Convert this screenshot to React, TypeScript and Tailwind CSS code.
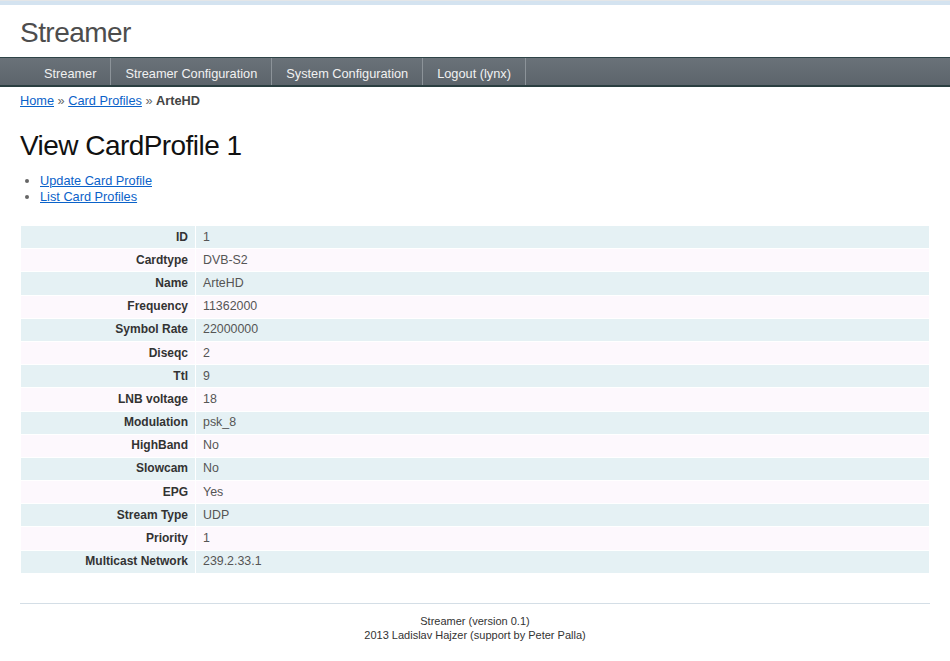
const menu = ["Streamer", "Streamer Configuration", "System Configuration", "Logout (lynx)"];

const rows: [string, string][] = [
  ["ID", "1"],
  ["Cardtype", "DVB-S2"],
  ["Name", "ArteHD"],
  ["Frequency", "11362000"],
  ["Symbol Rate", "22000000"],
  ["Diseqc", "2"],
  ["Ttl", "9"],
  ["LNB voltage", "18"],
  ["Modulation", "psk_8"],
  ["HighBand", "No"],
  ["Slowcam", "No"],
  ["EPG", "Yes"],
  ["Stream Type", "UDP"],
  ["Priority", "1"],
  ["Multicast Network", "239.2.33.1"],
];

export default function App() {
  return (
    <div className="min-h-[661px] w-[950px] bg-white font-['Liberation_Sans',Arial,sans-serif] text-[#333]">
      <div className="h-[1px] bg-[#e4e6e8]" />
      <div className="h-[4px] bg-[#d4e3f0]" />

      <header className="h-[52px] px-[20px] pt-[12px]">
        <div className="text-[28px] leading-[32px] tracking-[-0.55px] text-[#4d4d4d]">Streamer</div>
      </header>

      <nav className="flex h-[30px] border-t border-b-2 border-t-[#2e4447] border-b-[#2a3e40] bg-gradient-to-b from-[#6a7279] to-[#5c646b] pl-[30px]">
        {menu.map((item) => (
          <div
            key={item}
            className="border-r border-r-[#8c9399] px-[14px] pt-[7px] pb-[3px] text-[12.75px] leading-[17px] text-[#f1f1f1]"
          >
            {item}
          </div>
        ))}
      </nav>

      <div className="mt-[6px] px-[20px] text-[12.75px] leading-[16px]">
        <a href="#" className="text-[#0a62c9] underline">Home</a>
        <span className="text-[#666]"> » </span>
        <a href="#" className="text-[#0a62c9] underline">Card Profiles</a>
        <span className="text-[#666]"> » </span>
        <span className="font-bold text-[#444]">ArteHD</span>
      </div>

      <main className="px-[20px]">
        <h1 className="mt-[21px] text-[28px] leading-[32px] tracking-[-0.55px] text-[#111]">View CardProfile 1</h1>

        <ul className="mt-[11px] list-disc pl-[20px] text-[12.75px] leading-[16px] marker:text-[#666]">
          <li>
            <a href="#" className="text-[#0a62c9] underline">Update Card Profile</a>
          </li>
          <li>
            <a href="#" className="text-[#0a62c9] underline">List Card Profiles</a>
          </li>
        </ul>

        <table className="mt-[20px] w-full border-separate border-spacing-[1px]">
          <tbody>
            {rows.map(([label, value], i) => (
              <tr key={label} className={i % 2 === 0 ? "bg-[#e5f1f4]" : "bg-[#fdf8fd]"}>
                <th className="h-[22.2px] w-[174px] px-[7px] py-0 text-right text-[12px] font-bold leading-[15px] text-[#333]">
                  {label}
                </th>
                <td className="h-[22.2px] px-[7px] py-0 text-[12.4px] leading-[15px] text-[#555]">{value}</td>
              </tr>
            ))}
          </tbody>
        </table>
      </main>

      <footer className="mx-[20px] mt-[29px] border-t border-t-[#d4dee6] pt-[10px] text-center text-[11px] leading-[14px] text-[#333]">
        <div>Streamer (version 0.1)</div>
        <div>2013 Ladislav Hajzer (support by Peter Palla)</div>
      </footer>
    </div>
  );
}
